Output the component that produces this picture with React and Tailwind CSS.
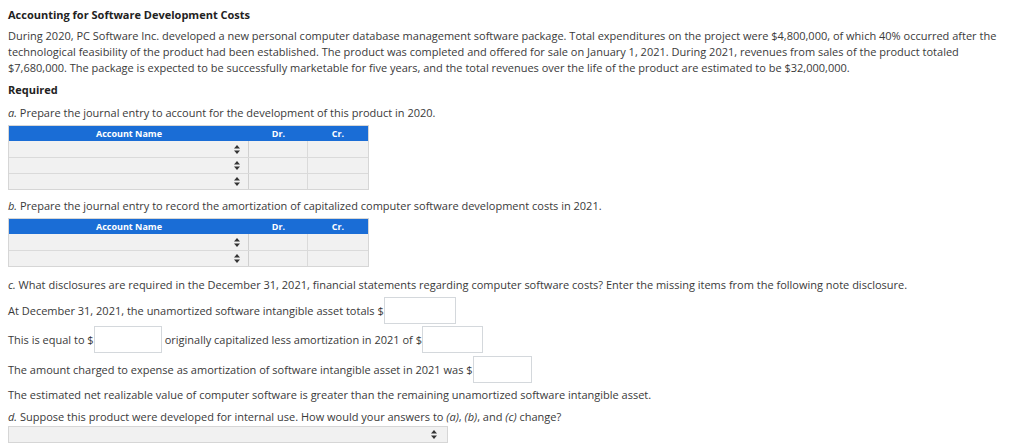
import React from 'react'

const font = { fontFamily: '"Open Sans", "Noto Sans", sans-serif' }

function Arrows() {
  return (
    <svg width="6" height="9" viewBox="0 0 6 9" className="shrink-0">
      <path d="M3 0 L6 3.5 H0 Z" fill="#333" />
      <path d="M3 9 L6 5.5 H0 Z" fill="#333" />
    </svg>
  )
}

function JournalTable({ rows }) {
  return (
    <div className="w-[361px] border border-[#d6d6d6] text-[9px]">
      <div className="flex h-[15px] bg-[#1a6dd6] text-white font-bold items-center">
        <div className="w-[240px] text-center">Account Name</div>
        <div className="w-[59px] text-center">Dr.</div>
        <div className="flex-1 text-center">Cr.</div>
      </div>
      {Array.from({ length: rows }).map((_, i) => (
        <div key={i} className={`flex h-[16px] bg-[#f1f1f1] ${i > 0 ? 'border-t border-[#dadada]' : ''}`}>
          <div className="w-[240px] flex items-center justify-end pr-[8px] border-r border-[#d0d0d0]">
            <Arrows />
          </div>
          <div className="w-[59px] border-r border-[#dadada]" />
          <div className="flex-1" />
        </div>
      ))}
    </div>
  )
}

function Box({ w }) {
  return <span className={`inline-block align-middle h-[27px] ${w} border border-[#d4d8dc] bg-white`} />
}

export default function App() {
  return (
    <div className="bg-white text-[#3a3a3a] px-[8px] pt-[7px] text-[11px] leading-[16px] w-[1024px] h-[446px] overflow-hidden" style={font}>
      <div className="font-bold text-[11px] text-[#222]">Accounting for Software Development Costs</div>
      <p className="mt-[5px]">
        During 2020, PC Software Inc. developed a new personal computer database management software package. Total expenditures on the project were $4,800,000, of which 40% occurred after the technological feasibility of the product had been established. The product was completed and offered for sale on January 1, 2021. During 2021, revenues from sales of the product totaled $7,680,000. The package is expected to be successfully marketable for five years, and the total revenues over the life of the product are estimated to be $32,000,000.
      </p>
      <div className="font-bold text-[#222] mt-[6px]">Required</div>
      <p className="mt-[7px]"><i>a.</i> Prepare the journal entry to account for the development of this product in 2020.</p>
      <div className="mt-[4px]"><JournalTable rows={3} /></div>
      <p className="mt-[8px]"><i>b.</i> Prepare the journal entry to record the amortization of capitalized computer software development costs in 2021.</p>
      <div className="mt-[4px]"><JournalTable rows={2} /></div>
      <p className="mt-[10px]"><i>c.</i> What disclosures are required in the December 31, 2021, financial statements regarding computer software costs? Enter the missing items from the following note disclosure.</p>
      <div className="mt-[4px] flex items-center h-[27px]">
        <span>At December 31, 2021, the unamortized software intangible asset totals $</span>
        <Box w="w-[72px]" />
      </div>
      <div className="mt-[2px] flex items-center h-[27px]">
        <span>This is equal to $</span>
        <Box w="w-[68px]" />
        <span className="ml-[3px]">originally capitalized less amortization in 2021 of $</span>
        <Box w="w-[61px]" />
      </div>
      <div className="mt-[3px] flex items-center h-[27px]">
        <span>The amount charged to expense as amortization of software intangible asset in 2021 was $</span>
        <Box w="w-[59px]" />
      </div>
      <p className="mt-[4px]">The estimated net realizable value of computer software is greater than the remaining unamortized software intangible asset.</p>
      <p className="mt-[6px]"><i>d.</i> Suppose this product were developed for internal use. How would your answers to <i>(a)</i>, <i>(b)</i>, and <i>(c)</i> change?</p>
      <div className="mt-[1px] w-[440px] h-[17px] bg-[#f1f1f1] border border-[#d6d6d6] flex items-center justify-end pr-[10px]">
        <Arrows />
      </div>
    </div>
  )
}
